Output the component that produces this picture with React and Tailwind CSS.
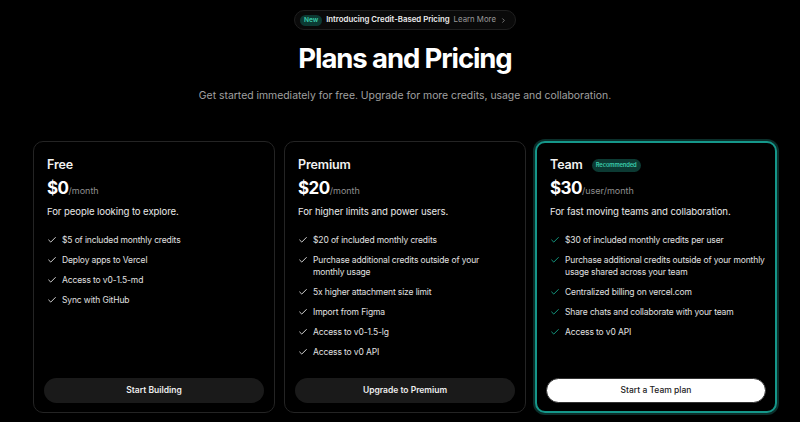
import React from "react";

const Check = ({ teal }) => (
  <svg width="10" height="10" viewBox="0 0 24 24" fill="none" stroke={teal ? "#16a58b" : "#e5e5e5"} strokeWidth="2.2" strokeLinecap="round" strokeLinejoin="round" className="shrink-0 mt-[1px]">
    <path d="M20 6 9 17l-5-5" />
  </svg>
);

const plans = [
  {
    name: "Free",
    price: "$0",
    unit: "/month",
    desc: "For people looking to explore.",
    features: [
      "$5 of included monthly credits",
      "Deploy apps to Vercel",
      "Access to v0-1.5-md",
      "Sync with GitHub",
    ],
    cta: "Start Building",
  },
  {
    name: "Premium",
    price: "$20",
    unit: "/month",
    desc: "For higher limits and power users.",
    features: [
      "$20 of included monthly credits",
      "Purchase additional credits outside of your monthly usage",
      "5x higher attachment size limit",
      "Import from Figma",
      "Access to v0-1.5-lg",
      "Access to v0 API",
    ],
    cta: "Upgrade to Premium",
  },
  {
    name: "Team",
    price: "$30",
    unit: "/user/month",
    desc: "For fast moving teams and collaboration.",
    features: [
      "$30 of included monthly credits per user",
      "Purchase additional credits outside of your monthly usage shared across your team",
      "Centralized billing on vercel.com",
      "Share chats and collaborate with your team",
      "Access to v0 API",
    ],
    cta: "Start a Team plan",
    team: true,
  },
];

function Card({ p }) {
  const outer = p.team
    ? "border-2 border-[#15978a] shadow-[0_0_0_2px_#0b2f2b]"
    : "border border-[#242424]";
  return (
    <div className={`w-[242px] h-[272px] rounded-[10px] bg-black flex flex-col ${outer}`}>
      <div className={`flex flex-col flex-1 ${p.team ? "pt-[13px] pl-[13px] pr-[4px]" : "pt-[14px] pl-[13px] pr-[18px]"}`}>
        <div className="flex items-center gap-[9px] h-[18px]">
          <span className="text-[12.5px] font-semibold text-[#f2f2f2] leading-[18px] tracking-[-0.01em]">{p.name}</span>
          {p.team && (
            <span className="rounded-full bg-[#0c3a33] text-[#3ccfae] text-[5.8px] font-semibold px-[4px] py-[2.5px] leading-[8px] tracking-[-0.02em]">Recommended</span>
          )}
        </div>
        <div className="mt-[2px] flex items-baseline h-[24px]">
          <span className="text-[17px] font-bold text-white leading-[24px] tracking-[-0.03em]">{p.price}</span>
          <span className="text-[9px] text-[#8f8f8f]">{p.unit}</span>
        </div>
        <div className="mt-[4px] text-[9.6px] text-[#e8e8e8] leading-[16px] tracking-[-0.01em] whitespace-nowrap">{p.desc}</div>
        <ul className="mt-[14px] flex flex-col gap-[8px]">
          {p.features.map((f) => (
            <li key={f} className="flex gap-[5px] text-[8.5px] leading-[12px] text-[#e0e0e0] tracking-[-0.015em]">
              <Check teal={p.team} />
              <span>{f}</span>
            </li>
          ))}
        </ul>
      </div>
      <div className={p.team ? "px-[9px] pb-[8px]" : "px-[10px] pb-[9px]"}>
        <button
          className={`w-full h-[25px] rounded-full text-[8.5px] ${
            p.team
              ? "bg-white text-[#222] font-medium border border-[#333]"
              : "bg-[#1a1a1a] text-[#ededed] font-semibold"
          }`}
        >
          {p.cta}
        </button>
      </div>
    </div>
  );
}

export default function App() {
  return (
    <div
      className="w-[800px] h-[422px] bg-black overflow-hidden flex flex-col items-center pl-[10px]"
      style={{ fontFamily: "Inter, 'Noto Sans', sans-serif" }}
    >
      <div className="mt-[10px] h-[20px] flex items-center gap-[4px] rounded-full border border-[#1f1f1f] bg-[#0a0a0a] pl-[5px] pr-[8px]">
        <span className="rounded-full bg-[#0c3a33] text-[#3ccfae] text-[6.5px] font-semibold px-[4px] leading-[11px]">New</span>
        <span className="text-[7.8px] font-semibold text-[#ededed]">Introducing Credit-Based Pricing</span>
        <span className="text-[7.8px] text-[#9a9a9a]">Learn More</span>
        <svg width="7" height="7" viewBox="0 0 24 24" fill="none" stroke="#9a9a9a" strokeWidth="2.5" strokeLinecap="round" strokeLinejoin="round"><path d="m9 18 6-6-6-6" /></svg>
      </div>
      <h1 className="mt-[8px] text-[27.5px] font-bold text-white tracking-[-0.04em] leading-[40px]">Plans and Pricing</h1>
      <p className="mt-[10px] text-[10.4px] text-[#a1a1a1] leading-[16px]">
        Get started immediately for free. Upgrade for more credits, usage and collaboration.
      </p>
      <div className="self-start ml-[23px] mt-[37px] flex gap-[9px]">
        {plans.map((p) => (
          <Card key={p.name} p={p} />
        ))}
      </div>
    </div>
  );
}
